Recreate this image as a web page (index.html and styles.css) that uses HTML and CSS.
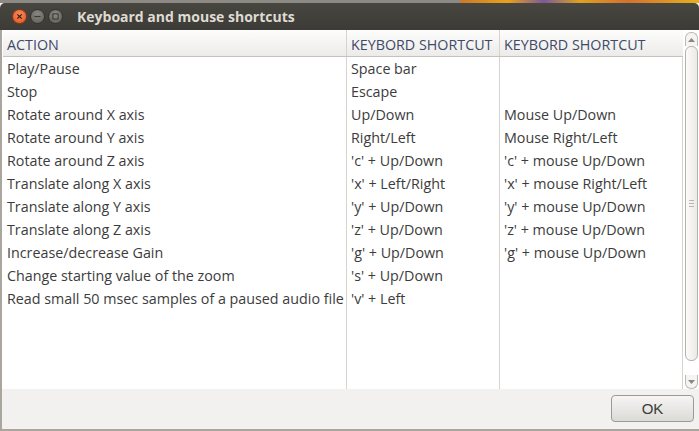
FILE: index.html
```html
<!DOCTYPE html>
<html>
<head>
<meta charset="utf-8">
<link rel="stylesheet" href="styles.css">
</head>
<body>
<div class="strip"><div class="strip-l"></div><div class="strip-r"></div></div>
<div class="window">
  <div class="titlebar">
    <div class="btns">
      <span class="wb close"><svg width="15" height="15" viewBox="0 0 15 15"><path d="M5 5 L10 10 M10 5 L5 10" stroke="#3a1a0a" stroke-width="1.4"/></svg></span>
      <span class="wb"><svg width="15" height="15" viewBox="0 0 15 15"><path d="M4 7.5 H11" stroke="#3a3935" stroke-width="1.4"/></svg></span>
      <span class="wb"><svg width="15" height="15" viewBox="0 0 15 15"><rect x="4.5" y="4.5" width="6" height="6" fill="none" stroke="#3a3935" stroke-width="1.2"/></svg></span>
    </div>
    <div class="title">Keyboard and mouse shortcuts</div>
  </div>
  <div class="body">
    <div class="tablewrap">
      <div class="table">
        <div class="thead">
          <div class="th c1">ACTION</div>
          <div class="th c2">KEYBORD SHORTCUT</div>
          <div class="th c3">KEYBORD SHORTCUT</div>
        </div>
        <div class="tbody">
          <div class="col c1">
            <div class="cell">Play/Pause</div>
            <div class="cell">Stop</div>
            <div class="cell">Rotate around X axis</div>
            <div class="cell">Rotate around Y axis</div>
            <div class="cell">Rotate around Z axis</div>
            <div class="cell">Translate along X axis</div>
            <div class="cell">Translate along Y axis</div>
            <div class="cell">Translate along Z axis</div>
            <div class="cell">Increase/decrease Gain</div>
            <div class="cell">Change starting value of the zoom</div>
            <div class="cell">Read small 50 msec samples of a paused audio file</div>
          </div>
          <div class="col c2">
            <div class="cell">Space bar</div>
            <div class="cell">Escape</div>
            <div class="cell">Up/Down</div>
            <div class="cell">Right/Left</div>
            <div class="cell">'c' + Up/Down</div>
            <div class="cell">'x' + Left/Right</div>
            <div class="cell">'y' + Up/Down</div>
            <div class="cell">'z' + Up/Down</div>
            <div class="cell">'g' + Up/Down</div>
            <div class="cell">'s' + Up/Down</div>
            <div class="cell">'v' + Left</div>
          </div>
          <div class="col c3">
            <div class="cell"></div>
            <div class="cell"></div>
            <div class="cell">Mouse Up/Down</div>
            <div class="cell">Mouse Right/Left</div>
            <div class="cell">'c' + mouse Up/Down</div>
            <div class="cell">'x' + mouse Right/Left</div>
            <div class="cell">'y' + mouse Up/Down</div>
            <div class="cell">'z' + mouse Up/Down</div>
            <div class="cell">'g' + mouse Up/Down</div>
            <div class="cell"></div>
            <div class="cell"></div>
          </div>
        </div>
      </div>
      <div class="scrollbar">
        <div class="arrow up"><svg width="7" height="4" viewBox="0 0 7 4"><path d="M0 4 L3.5 0 L7 4Z" fill="#8a8883"/></svg></div>
        <div class="thumb"><div class="grip"></div></div>
        <div class="arrow down"><svg width="7" height="4" viewBox="0 0 7 4"><path d="M0 0 L3.5 4 L7 0Z" fill="#8a8883"/></svg></div>
      </div>
    </div>
    <div class="footer">
      <button class="ok">OK</button>
    </div>
  </div>
</div>
</body>
</html>
```

FILE: styles.css
```css
* { box-sizing: border-box; }
html, body { margin: 0; padding: 0; }
body {
  width: 699px;
  height: 431px;
  overflow: hidden;
  background: #f2f1f0;
  font-family: "Open Sans", "Noto Sans", sans-serif;
}
.strip { height: 3px; display: flex; }
.strip-l { width: 460px; background: #8d8a85; }
.strip-r { flex: 1; background: linear-gradient(90deg, #c97a2a, #e8a21c 20%, #7a5a9a 35%, #e0a020 50%, #d47030 70%, #e8b020); }
.window {
  height: 428px;
  display: flex;
  flex-direction: column;
}
.titlebar {
  height: 27px;
  background: linear-gradient(#47463f, #3c3b37);
  display: flex;
  align-items: center;
  padding-left: 12px;
  border-radius: 5px 5px 0 0;
}
.btns { display: flex; gap: 3px; }
.wb {
  width: 15px; height: 15px; border-radius: 50%;
  background: radial-gradient(circle at 50% 35%, #8a8982, #5c5b56);
  border: 1px solid #33322f;
  display: flex; align-items: center; justify-content: center;
}
.wb svg { display: block; }
.wb.close { background: radial-gradient(circle at 50% 35%, #f78b5c, #e4531d); border-color: #8a3a15; }
.title {
  margin-left: 14px;
  color: #dfdbd2;
  font-weight: bold;
  font-size: 14px;
  letter-spacing: 0;
}
.body {
  flex: 1;
  display: flex;
  flex-direction: column;
  border-left: 2px solid #aaa69f;
  border-bottom: 2px solid #aaa69f;
}
.tablewrap {
  height: 359px;
  display: flex;
  background: #fff;
  padding-left: 1px;
}
.table { width: 680px; display: flex; flex-direction: column; }
.thead {
  display: flex;
  height: 27px;
  background: linear-gradient(#fdfdfc, #ecebe9);
  border-bottom: 1px solid #c4c2bd;
}
.th {
  color: #3d4a6a;
  font-size: 14.3px;
  padding: 5px 0 0 4px;
  white-space: nowrap;
}
.th.c2, .th.c3 { border-left: 1px solid #d6d4cf; }
.c1 { width: 343px; }
.c2 { width: 153px; }
.c3 { width: 184px; }
.tbody { flex: 1; display: flex; }
.col { padding-top: 0; }
.col.c2, .col.c3 { border-left: 1px solid #d6d4cf; }
.col.c3 { border-right: 1px solid #d6d4cf; }
.cell {
  height: 23px;
  line-height: 23px;
  font-size: 14.3px;
  color: #3c3c3c;
  padding-left: 4px;
  white-space: nowrap;
}
.scrollbar {
  width: 16px;
  margin-left: 0;
  padding: 2px 1px 0 2px;
  display: flex;
  flex-direction: column;
  background: #fff;
}
.arrow {
  height: 14px;
  border: 1px solid #bdbab4;
  background: #f5f4f2;
  display: flex; align-items: center; justify-content: center;
}
.arrow.up { border-radius: 6px 6px 0 0; border-bottom: none; }
.arrow.down { border-radius: 0 0 6px 6px; border-top: none; }
.thumb {
  flex: 1;
  border: 1px solid #b5b2ac;
  border-radius: 6px;
  background: linear-gradient(90deg, #fbfbfa, #eceae7);
  display: flex; align-items: center; justify-content: center;
  margin-bottom: 14px;
}
.grip {
  width: 5px; height: 7px;
  background: repeating-linear-gradient(#b8b5af 0 1px, transparent 1px 3px);
}
.footer {
  flex: 1;
  display: flex;
  justify-content: flex-end;
  align-items: flex-start;
  padding: 6px 5px 0 0;
}
.ok {
  width: 83px;
  height: 27px;
  border: 1px solid #9d9a93;
  border-radius: 4px;
  background: linear-gradient(#f6f5f4, #dcdad6);
  font-family: "Liberation Sans", sans-serif;
  font-size: 15px;
  color: #3c3c3c;
  padding: 0;
}
```
